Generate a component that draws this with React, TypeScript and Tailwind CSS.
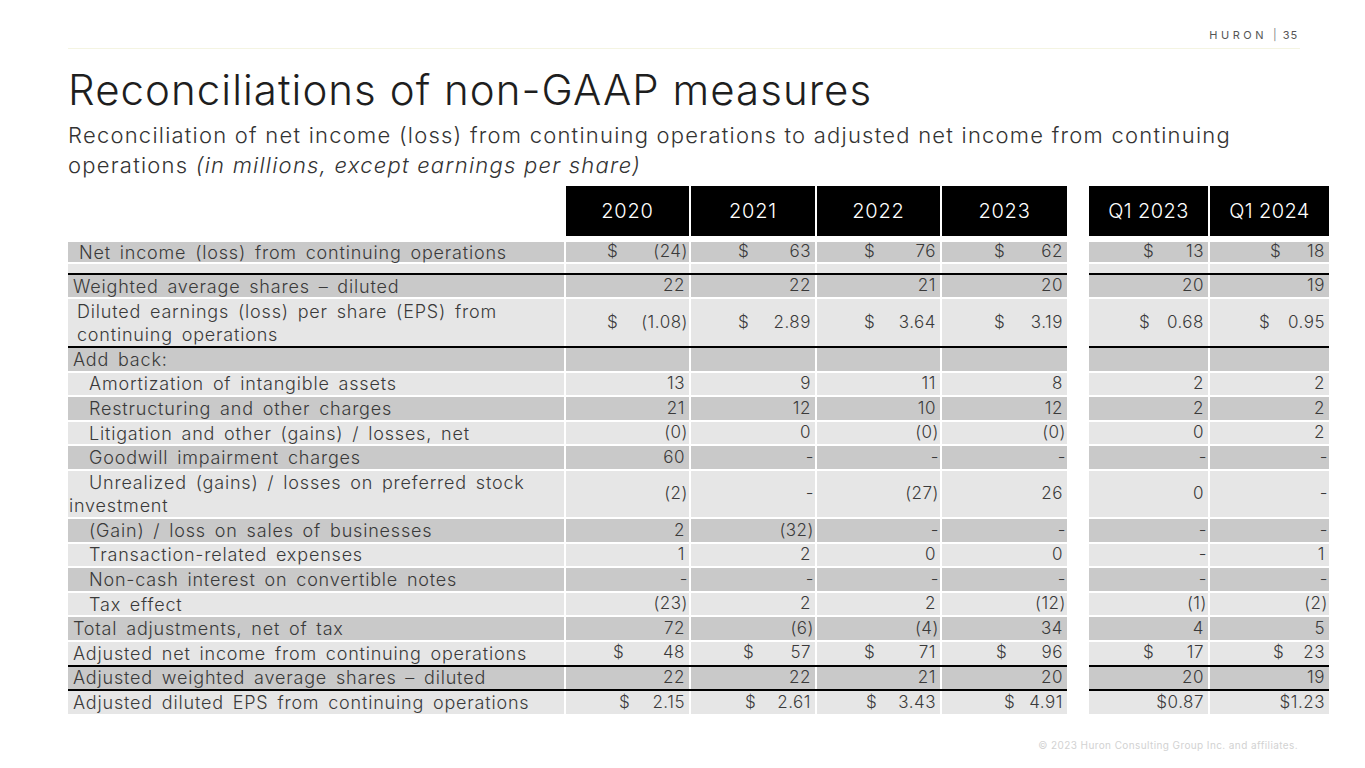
const COLS = 'grid grid-cols-[496px_123px_124px_123px_125px_18px_119px_119px] gap-x-[2px]';

const DEFAULT_OFFS = [41, 47, 47, 52, 54, 60];

type Row = {
  label: string[];
  pl: number;
  hang?: boolean;
  tone: 'g' | 'l';
  h: string;
  vals: string[];
  offs?: number[];
  after: 'w' | 'b' | 'none';
};

const EMPTY = ['', '', '', '', '', ''];

const ROWS: Row[] = [
  { label: ['Net income (loss) from continuing operations'], pl: 11, tone: 'g', h: 'h-[20px]', vals: ['$ (24)', '$ 63', '$ 76', '$ 62', '$ 13', '$ 18'], after: 'w' },
  { label: [''], pl: 0, tone: 'l', h: 'h-[9px]', vals: EMPTY, after: 'b' },
  { label: ['Weighted average shares – diluted'], pl: 5, tone: 'g', h: 'h-[22px]', vals: ['22', '22', '21', '20', '20', '19'], after: 'w' },
  {
    label: ['Diluted earnings (loss) per share (EPS) from', 'continuing operations'],
    pl: 9,
    tone: 'l',
    h: 'h-[47px]',
    vals: ['$ (1.08)', '$ 2.89', '$ 3.64', '$ 3.19', '$ 0.68', '$ 0.95'],
    offs: [41, 47, 47, 52, 50, 49],
    after: 'b',
  },
  { label: ['Add back:'], pl: 5, tone: 'g', h: 'h-[22.6px]', vals: EMPTY, after: 'w' },
  { label: ['Amortization of intangible assets'], pl: 21, tone: 'l', h: 'h-[22.6px]', vals: ['13', '9', '11', '8', '2', '2'], after: 'w' },
  { label: ['Restructuring and other charges'], pl: 21, tone: 'g', h: 'h-[22.6px]', vals: ['21', '12', '10', '12', '2', '2'], after: 'w' },
  { label: ['Litigation and other (gains) / losses, net'], pl: 21, tone: 'l', h: 'h-[22.6px]', vals: ['(0)', '0', '(0)', '(0)', '0', '2'], after: 'w' },
  { label: ['Goodwill impairment charges'], pl: 21, tone: 'g', h: 'h-[22.6px]', vals: ['60', '-', '-', '-', '-', '-'], after: 'w' },
  {
    label: ['Unrealized (gains) / losses on preferred stock', 'investment'],
    pl: 21,
    hang: true,
    tone: 'l',
    h: 'h-[46px]',
    vals: ['(2)', '-', '(27)', '26', '0', '-'],
    after: 'w',
  },
  { label: ['(Gain) / loss on sales of businesses'], pl: 21, tone: 'g', h: 'h-[22.6px]', vals: ['2', '(32)', '-', '-', '-', '-'], after: 'w' },
  { label: ['Transaction-related expenses'], pl: 21, tone: 'l', h: 'h-[22.6px]', vals: ['1', '2', '0', '0', '-', '1'], after: 'w' },
  { label: ['Non-cash interest on convertible notes'], pl: 21, tone: 'g', h: 'h-[22.6px]', vals: ['-', '-', '-', '-', '-', '-'], after: 'w' },
  { label: ['Tax effect'], pl: 21, tone: 'l', h: 'h-[22.6px]', vals: ['(23)', '2', '2', '(12)', '(1)', '(2)'], after: 'w' },
  { label: ['Total adjustments, net of tax'], pl: 5, tone: 'g', h: 'h-[22.6px]', vals: ['72', '(6)', '(4)', '34', '4', '5'], after: 'w' },
  {
    label: ['Adjusted net income from continuing operations'],
    pl: 5,
    tone: 'l',
    h: 'h-[22.6px]',
    vals: ['$ 48', '$ 57', '$ 71', '$ 96', '$ 17', '$ 23'],
    offs: [47, 52, 47, 54, 54, 63],
    after: 'b',
  },
  { label: ['Adjusted weighted average shares – diluted'], pl: 5, tone: 'g', h: 'h-[22.6px]', vals: ['22', '22', '21', '20', '20', '19'], after: 'b' },
  {
    label: ['Adjusted diluted EPS from continuing operations'],
    pl: 5,
    tone: 'l',
    h: 'h-[22.6px]',
    vals: ['$ 2.15', '$ 2.61', '$ 3.43', '$ 4.91', '$0.87', '$1.23'],
    offs: [53, 54, 49, 62, 0, 0],
    after: 'none',
  },
];

function Cell({ v, off, bg, h }: { v: string; off: number; bg: string; h: string }) {
  const hasDollar = v.startsWith('$ ');
  const num = hasDollar ? v.slice(2) : v;
  const hangs = num.endsWith(')') || num === '-';
  return (
    <div className={`${bg} ${h} flex items-center ${hangs ? 'pr-[1px]' : 'pr-[4px]'}`}>
      {hasDollar && <span style={{ paddingLeft: off }}>$</span>}
      <span className="ml-auto">{num}</span>
    </div>
  );
}

function TableRow({ row }: { row: Row }) {
  const bg = row.tone === 'g' ? 'bg-[#c9c9c9]' : 'bg-[#e6e6e6]';
  const offs = row.offs ?? DEFAULT_OFFS;
  return (
    <div className={COLS}>
      <div
        className={`${bg} ${row.h} flex flex-col justify-center text-[18px] leading-[23px] tracking-[0.045em] [word-spacing:3px]`}
        style={{ paddingLeft: row.hang ? 1 : row.pl }}
      >
        {row.label.map((l, i) => (
          <div key={i} style={{ paddingLeft: row.hang && i === 0 ? row.pl - 1 : 0 }}>
            {l}
          </div>
        ))}
      </div>
      {row.vals.slice(0, 4).map((v, i) => (
        <Cell key={i} v={v} off={offs[i]} bg={bg} h={row.h} />
      ))}
      <div />
      {row.vals.slice(4).map((v, i) => (
        <Cell key={i} v={v} off={offs[i + 4]} bg={bg} h={row.h} />
      ))}
    </div>
  );
}

function Rule() {
  return (
    <div className={COLS}>
      <div className="col-span-5 h-[2px] bg-black" />
      <div />
      <div className="col-span-2 h-[2px] bg-black" />
    </div>
  );
}

export default function App() {
  const years = ['2020', '2021', '2022', '2023'];
  const quarters = ['Q1 2023', 'Q1 2024'];

  return (
    <div className="w-[1365px] h-[768px] bg-white font-['Inter',sans-serif] text-[#3a3a3a] flex flex-col overflow-hidden">
      <div className="pl-[68px] pr-[65px] pt-[28px]">
        <div className="flex justify-end items-center gap-[6px] pr-[2px] text-[11px] text-[#555] h-[14px]">
          <span className="tracking-[0.32em]">HURON</span>
          <span className="text-[#888]">|</span>
          <span className="tracking-[0.08em]">35</span>
        </div>
        <div className="mt-[6px] border-b border-[#f4f4e2]" />

        <h1 className="mt-[19px] text-[42px] leading-[44px] font-light text-[#1e1e1e] tracking-[0.025em]">
          Reconciliations of non-GAAP measures
        </h1>
        <p className="mt-[8px] text-[22px] leading-[30px] text-[#333] font-light tracking-[0.056em]">
          Reconciliation of net income (loss) from continuing operations to adjusted net income from continuing
          <br />
          operations <em>(in millions, except earnings per share)</em>
        </p>

        <div className="mt-[6px] text-[17px] font-light tracking-[0.03em]">
          <div className={COLS}>
            <div />
            {years.map((y) => (
              <div key={y} className="h-[50px] bg-black text-white text-[20px] tracking-[0.04em] flex items-center justify-center">
                {y}
              </div>
            ))}
            <div />
            {quarters.map((q) => (
              <div key={q} className="h-[50px] bg-black text-white text-[20px] tracking-[0.02em] flex items-center justify-center">
                {q}
              </div>
            ))}
          </div>
          <div className="h-[6px]" />
          {ROWS.map((row, i) => (
            <div key={i}>
              <TableRow row={row} />
              {row.after === 'w' && <div className="h-[2px]" />}
              {row.after === 'b' && <Rule />}
            </div>
          ))}
        </div>
      </div>

      <div className="mt-auto pb-[15px] pr-[67px] flex justify-end text-[10px] tracking-[0.04em] text-[#d2d2d2]">
        © 2023 Huron Consulting Group Inc. and affiliates.
      </div>
    </div>
  );
}
